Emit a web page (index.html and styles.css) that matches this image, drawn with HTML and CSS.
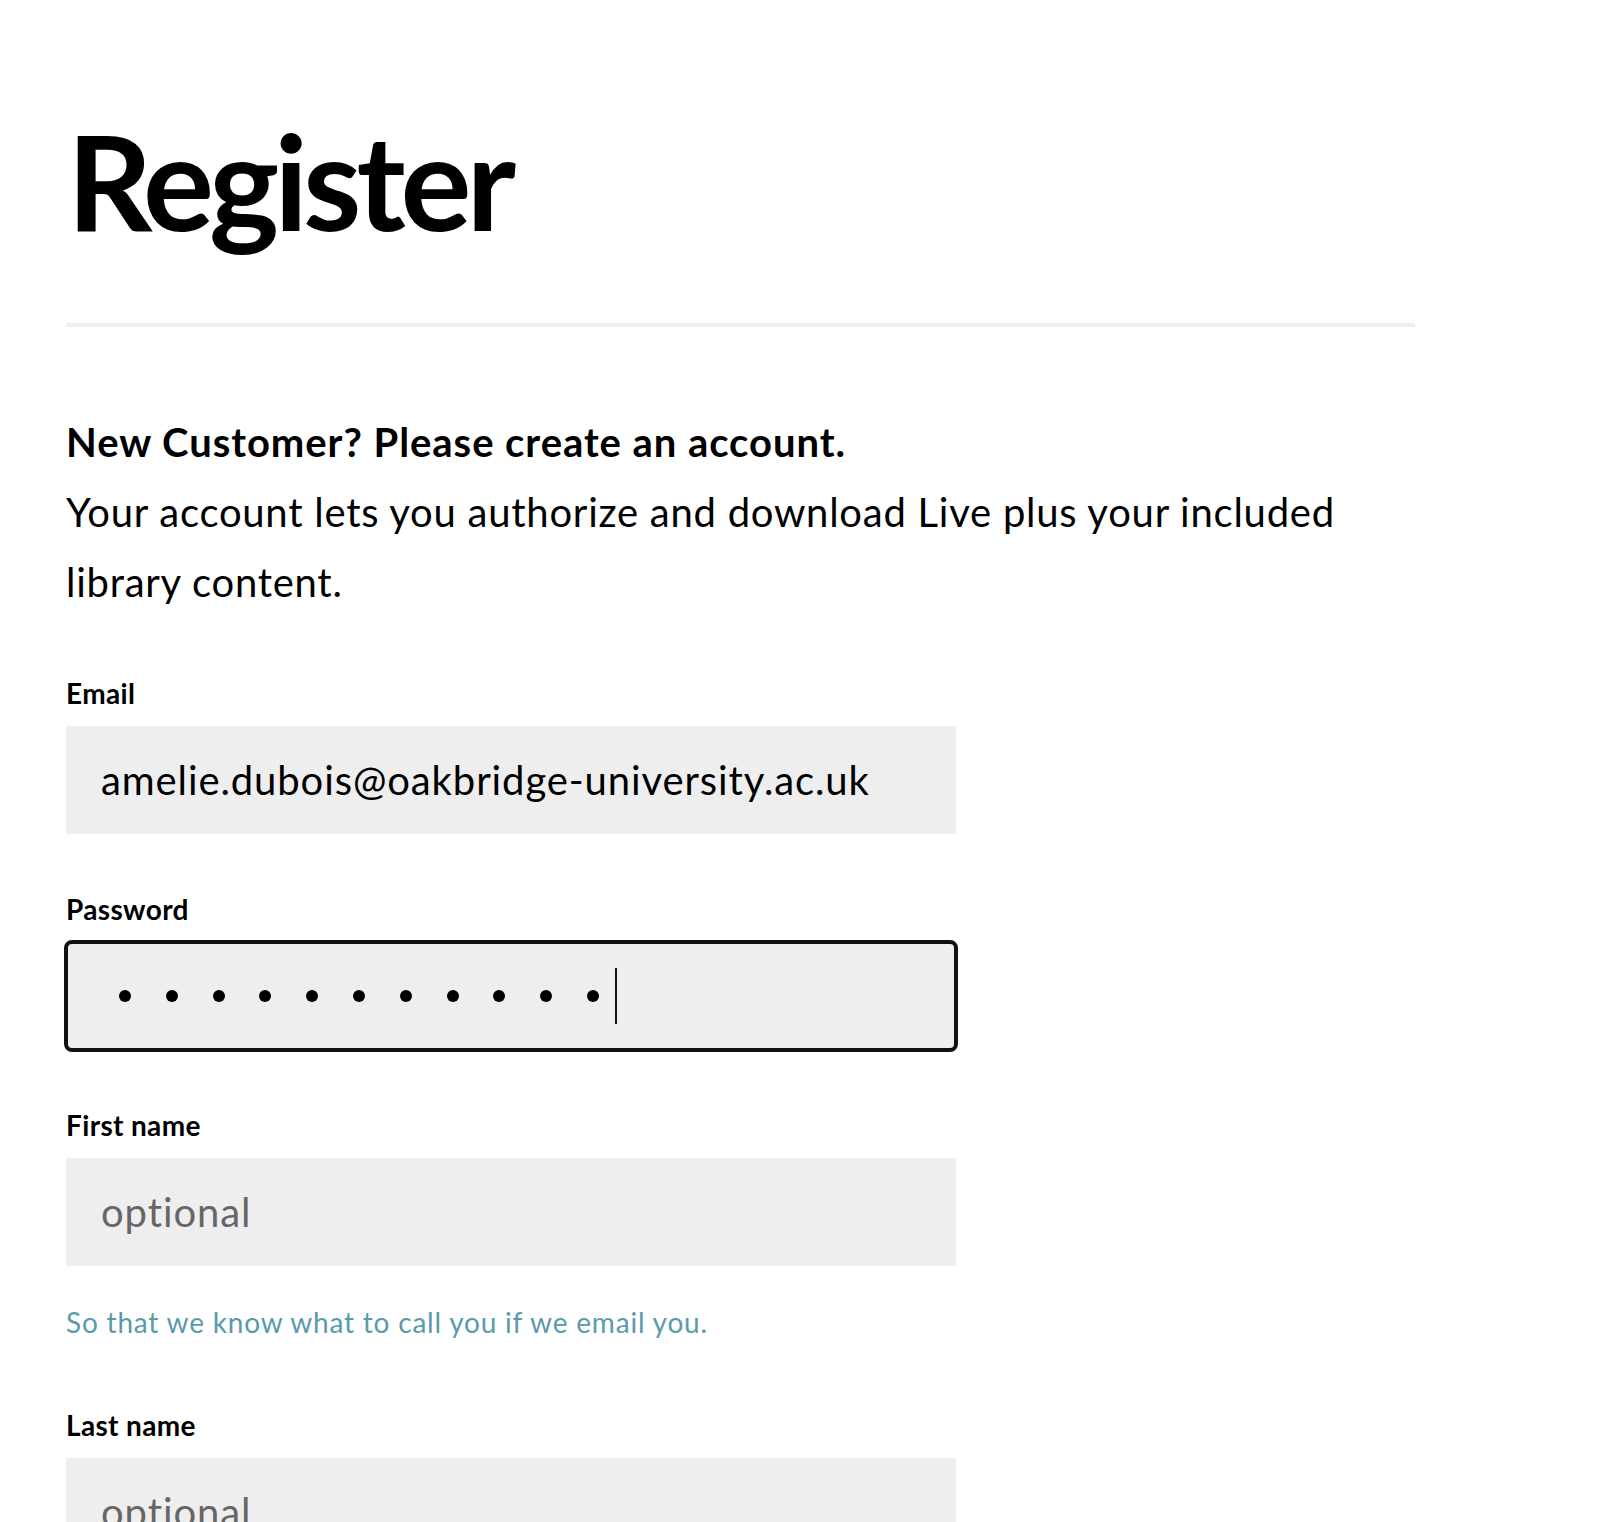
FILE: index.html
```html
<!DOCTYPE html>
<html lang="en">
<head>
<meta charset="utf-8">
<title>Register</title>
<link rel="stylesheet" href="styles.css">
</head>
<body>
<main class="page">
  <h1 class="title">Register</h1>
  <hr class="divider">
  <section class="intro">
    <p class="intro-lead">New Customer? Please create an account.</p>
    <p class="intro-text">Your account lets you authorize and download Live plus your included library content.</p>
  </section>
  <form class="form">
    <div class="field">
      <label class="field-label" for="email">Email</label>
      <input class="field-input" id="email" type="email" value="amelie.dubois@oakbridge-university.ac.uk">
    </div>
    <div class="field">
      <label class="field-label" for="password">Password</label>
      <div class="field-input field-input--focus" id="password" role="textbox" aria-label="Password">
        <span class="pw-dots">
          <span class="pw-dot"></span><span class="pw-dot"></span><span class="pw-dot"></span><span class="pw-dot"></span><span class="pw-dot"></span><span class="pw-dot"></span><span class="pw-dot"></span><span class="pw-dot"></span><span class="pw-dot"></span><span class="pw-dot"></span><span class="pw-dot"></span>
        </span>
        <span class="caret"></span>
      </div>
    </div>
    <div class="field field--hinted">
      <label class="field-label" for="first">First name</label>
      <input class="field-input" id="first" type="text" placeholder="optional">
      <p class="field-hint">So that we know what to call you if we email you.</p>
    </div>
    <div class="field">
      <label class="field-label" for="last">Last name</label>
      <input class="field-input" id="last" type="text" placeholder="optional">
    </div>
  </form>
</main>
</body>
</html>
```

FILE: styles.css
```css
html, body {
  margin: 0;
  padding: 0;
  background: #ffffff;
}

body {
  font-family: "Lato", "Open Sans", sans-serif;
  color: #000000;
}

.page {
  padding: 0 185px 0 66px;
}

.title {
  margin: 114px 0 0;
  font-size: 133px;
  line-height: 132px;
  font-weight: 700;
  letter-spacing: -5px;
  padding-left: 1px;
}

.divider {
  margin: 77px 0 0;
  height: 4px;
  border: 0;
  background: #eeeeee;
}

.intro {
  margin-top: 80px;
}

.intro-lead,
.intro-text {
  margin: 0;
  font-size: 40px;
  line-height: 70px;
}

.intro-lead {
  font-weight: 700;
  letter-spacing: 0.95px;
}

.intro-text {
  font-weight: 400;
  letter-spacing: 0.75px;
}

.form {
  margin-top: 56px;
  display: flex;
  flex-direction: column;
  gap: 55px;
}

.field {
  display: flex;
  flex-direction: column;
  gap: 13px;
}

.field-label {
  font-size: 28px;
  line-height: 40px;
  font-weight: 700;
  letter-spacing: 0.35px;
}

.field-input {
  box-sizing: border-box;
  width: 890px;
  height: 108px;
  margin: 0;
  padding: 0 35px;
  border: 0;
  border-radius: 0;
  background: #eeeeee;
  font-family: "Lato", "Open Sans", sans-serif;
  font-size: 40px;
  letter-spacing: 0.9px;
  color: #000000;
  outline: none;
}

.field-input::placeholder {
  color: #666666;
  opacity: 1;
}

.field-input--focus {
  display: flex;
  align-items: center;
  border-radius: 6px;
  outline: 4px solid #111111;
  outline-offset: -2px;
}

.pw-dots {
  display: flex;
  gap: 34.8px;
  margin-left: 18px;
}

.pw-dot {
  width: 12px;
  height: 12px;
  border-radius: 50%;
  background: #000000;
}

.caret {
  width: 2px;
  height: 56px;
  margin-left: 16px;
  background: #111111;
}

.field-hint {
  margin: 23px 0 8px;
  font-size: 28px;
  line-height: 40px;
  letter-spacing: 0.8px;
  color: #5a9aab;
}
```
